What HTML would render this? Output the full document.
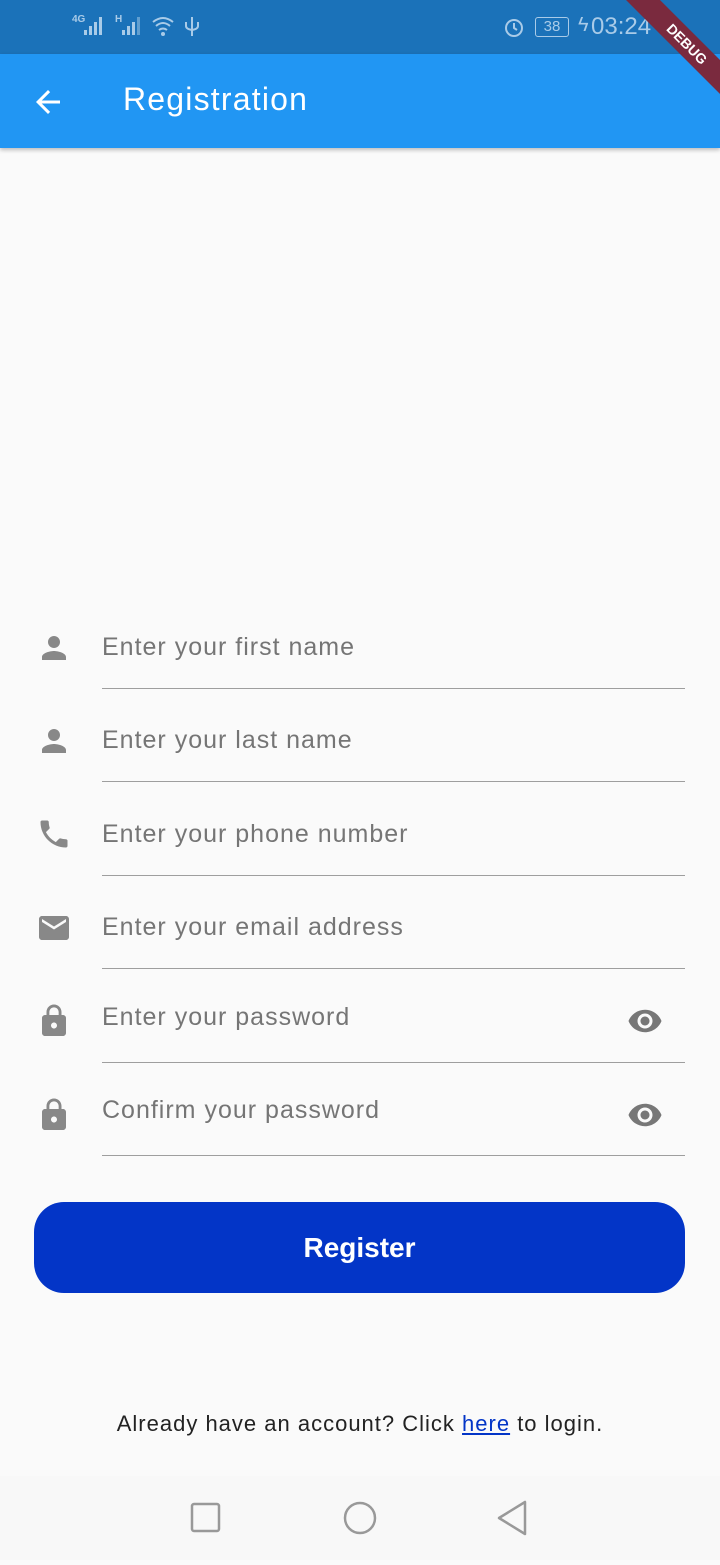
<!DOCTYPE html>
<html><head><meta charset="utf-8"><style>
*{margin:0;padding:0;box-sizing:border-box}
body{width:720px;height:1560px;background:#fafafa;font-family:"Liberation Sans",sans-serif;position:relative;overflow:hidden}
.sb{position:absolute;top:0;left:0;width:720px;height:54px;background:#1b72b9;color:#a9cbe8;overflow:hidden}
.ab{position:absolute;top:54px;left:0;width:720px;height:94px;background:#2196f3;box-shadow:0 2px 4px rgba(0,0,0,.25)}
.ab .t{position:absolute;left:123px;top:27px;font-size:32px;color:#fff;letter-spacing:1.2px}
.f{position:absolute;left:102px;width:583px;height:1px;background:#9e9e9e}
.l{position:absolute;left:102px;font-size:25px;color:#757575;letter-spacing:1px}
.ic{position:absolute;left:36px}
.btn{position:absolute;left:34px;top:1202px;width:651px;height:91px;background:#0335c7;border-radius:30px;color:#fff;font-weight:bold;font-size:28px;text-align:center;line-height:91px}
.ft{position:absolute;top:1411px;width:720px;text-align:center;font-size:22px;letter-spacing:1px;color:#222}
.ft a{color:#0335c7;text-decoration:underline}
.nav{position:absolute;top:1476px;left:0;width:720px;height:84px;background:#f8f8f8}
.dbg{position:absolute;left:612px;top:32px;width:150px;height:24px;background:#7a2a3e;transform:rotate(45deg);color:#fff;font-size:14px;font-weight:bold;text-align:center;line-height:24px;z-index:5}
</style></head><body>
<div class="sb">
<div style="position:absolute;left:72px;top:14px;font-size:10px;font-weight:bold">4G</div>
<svg style="position:absolute;left:82px;top:14px" width="70" height="22"><g fill="#a9cbe8"><rect x="2" y="16" width="3" height="5"/><rect x="7" y="12" width="3" height="9"/><rect x="12" y="8" width="3" height="13"/><rect x="17" y="3" width="3" height="18"/><rect x="40" y="16" width="3" height="5"/><rect x="45" y="12" width="3" height="9"/><rect x="50" y="8" width="3" height="13"/><rect x="55" y="3" width="3" height="18" opacity=".5"/></g></svg>
<div style="position:absolute;left:115px;top:14px;font-size:10px;font-weight:bold">H</div>
<svg style="position:absolute;left:150px;top:14px" width="50" height="24"><g fill="none" stroke="#a9cbe8" stroke-width="2"><path d="M3 8 Q13 0 23 8"/><path d="M6 12 Q13 6 20 12"/><path d="M9 16 Q13 13 17 16"/><path d="M42 3 V22 M36 8 V12 Q36 15 42 16 Q48 15 48 12 V8"/></g><circle cx="13" cy="20" r="2" fill="#a9cbe8"/></svg>
<svg style="position:absolute;left:503px;top:16px" width="22" height="22"><circle cx="11" cy="12" r="8" fill="none" stroke="#a9cbe8" stroke-width="2"/><path d="M11 7 V12 L14 14" fill="none" stroke="#a9cbe8" stroke-width="2"/></svg>
<div style="position:absolute;left:535px;top:17px;width:34px;height:20px;border:1.5px solid #a9cbe8;border-radius:3px;font-size:15px;text-align:center;line-height:17px">38</div>
<div style="position:absolute;left:578px;top:14px;font-size:20px">ϟ</div>
<div style="position:absolute;left:591px;top:13px;font-size:24px">03:24</div>
</div>
<div class="dbg">DEBUG</div>
<div class="ab">
<svg style="position:absolute;left:30px;top:30px" width="36" height="36" viewBox="0 0 24 24"><path fill="#fff" d="M20 11H7.83l5.59-5.59L12 4l-8 8 8 8 1.41-1.41L7.83 13H20v-2z"/></svg>
<div class="t">Registration</div></div>

<svg class="ic" style="top:630px" width="36" height="36" viewBox="0 0 24 24"><path fill="#888" d="M12 12c2.21 0 4-1.79 4-4s-1.79-4-4-4-4 1.79-4 4 1.79 4 4 4zm0 2c-2.67 0-8 1.34-8 4v2h16v-2c0-2.66-5.33-4-8-4z"/></svg>
<div class="l" style="top:633px">Enter your first name</div><div class="f" style="top:688px"></div>
<svg class="ic" style="top:723px" width="36" height="36" viewBox="0 0 24 24"><path fill="#888" d="M12 12c2.21 0 4-1.79 4-4s-1.79-4-4-4-4 1.79-4 4 1.79 4 4 4zm0 2c-2.67 0-8 1.34-8 4v2h16v-2c0-2.66-5.33-4-8-4z"/></svg>
<div class="l" style="top:726px">Enter your last name</div><div class="f" style="top:781px"></div>
<svg class="ic" style="top:816px" width="36" height="36" viewBox="0 0 24 24"><path fill="#888" d="M6.62 10.79c1.44 2.83 3.76 5.14 6.59 6.59l2.2-2.2c.27-.27.67-.36 1.02-.24 1.12.37 2.33.57 3.57.57.55 0 1 .45 1 1V20c0 .55-.45 1-1 1-9.39 0-17-7.61-17-17 0-.55.45-1 1-1h3.5c.55 0 1 .45 1 1 0 1.25.2 2.45.57 3.57.11.35.03.74-.25 1.02l-2.2 2.2z"/></svg>
<div class="l" style="top:820px">Enter your phone number</div><div class="f" style="top:875px"></div>
<svg class="ic" style="top:910px" width="36" height="36" viewBox="0 0 24 24"><path fill="#888" d="M20 4H4c-1.1 0-2 .9-2 2v12c0 1.1.9 2 2 2h16c1.1 0 2-.9 2-2V6c0-1.1-.9-2-2-2zm0 4l-8 5-8-5V6l8 5 8-5v2z"/></svg>
<div class="l" style="top:913px">Enter your email address</div><div class="f" style="top:968px"></div>
<svg class="ic" style="top:1003px" width="36" height="36" viewBox="0 0 24 24"><path fill="#888" d="M18 8h-1V6c0-2.76-2.24-5-5-5S7 3.24 7 6v2H6c-1.1 0-2 .9-2 2v10c0 1.1.9 2 2 2h12c1.1 0 2-.9 2-2V10c0-1.1-.9-2-2-2zm-6 9c-1.1 0-2-.9-2-2s.9-2 2-2 2 .9 2 2-.9 2-2 2zm3.1-9H8.9V6c0-1.71 1.39-3.1 3.1-3.1 1.71 0 3.1 1.39 3.1 3.1v2z"/></svg>
<div class="l" style="top:1003px">Enter your password</div>
<svg style="position:absolute;left:625px;top:1003px" width="40" height="36" viewBox="0 0 24 24"><path fill="#777" d="M12 4.5C7 4.5 2.73 7.61 1 12c1.73 4.39 6 7.5 11 7.5s9.27-3.11 11-7.5c-1.73-4.39-6-7.5-11-7.5zM12 17c-2.76 0-5-2.24-5-5s2.24-5 5-5 5 2.24 5 5-2.24 5-5 5zm0-8c-1.66 0-3 1.34-3 3s1.34 3 3 3 3-1.34 3-3-1.34-3-3-3z"/></svg>
<div class="f" style="top:1062px"></div>
<svg class="ic" style="top:1097px" width="36" height="36" viewBox="0 0 24 24"><path fill="#888" d="M18 8h-1V6c0-2.76-2.24-5-5-5S7 3.24 7 6v2H6c-1.1 0-2 .9-2 2v10c0 1.1.9 2 2 2h12c1.1 0 2-.9 2-2V10c0-1.1-.9-2-2-2zm-6 9c-1.1 0-2-.9-2-2s.9-2 2-2 2 .9 2 2-.9 2-2 2zm3.1-9H8.9V6c0-1.71 1.39-3.1 3.1-3.1 1.71 0 3.1 1.39 3.1 3.1v2z"/></svg>
<div class="l" style="top:1096px">Confirm your password</div>
<svg style="position:absolute;left:625px;top:1097px" width="40" height="36" viewBox="0 0 24 24"><path fill="#777" d="M12 4.5C7 4.5 2.73 7.61 1 12c1.73 4.39 6 7.5 11 7.5s9.27-3.11 11-7.5c-1.73-4.39-6-7.5-11-7.5zM12 17c-2.76 0-5-2.24-5-5s2.24-5 5-5 5 2.24 5 5-2.24 5-5 5zm0-8c-1.66 0-3 1.34-3 3s1.34 3 3 3 3-1.34 3-3-1.34-3-3-3z"/></svg>
<div class="f" style="top:1155px"></div>

<div class="btn">Register</div>
<div class="ft">Already have an account? Click <a>here</a> to login.</div>
<div class="nav"><svg width="720" height="84"><g fill="none" stroke="#999" stroke-width="2.5"><rect x="192" y="28" width="27" height="27" rx="2"/><circle cx="360" cy="42" r="15"/><path d="M525 26 L525 58 L499 42 Z" stroke-linejoin="round"/></g></svg></div>
</body></html>
